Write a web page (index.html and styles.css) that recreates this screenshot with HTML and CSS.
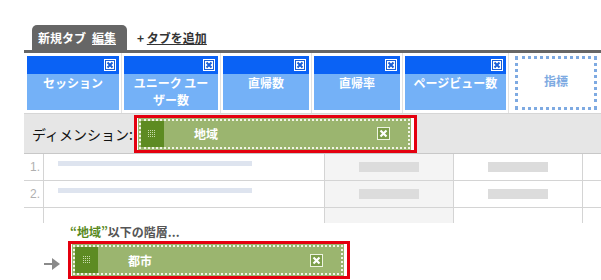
FILE: index.html
```html
<!DOCTYPE html>
<html lang="ja">
<head>
    <meta charset="UTF-8">
    <title>カスタムレポート</title>
    <link rel="stylesheet" href="styles.css">
</head>
<body>
    <div class="report">
        <!-- Tabs -->
        <div class="tabs">
            <div class="tab">新規タブ <a class="tab-edit">編集</a></div>
            <div class="add-tab">+ <a>タブを追加</a></div>
        </div>

        <!-- Metrics -->
        <div class="metrics">
            <div class="metric-cell">
                <div class="metric w1">
                    <div class="metric-head"><svg class="close" width="12" height="12" viewBox="0 0 12 12"><rect width="12" height="12" fill="#fff"/><rect x="1.5" y="1.5" width="9" height="9" fill="none" stroke="#1a5fd6"/><path d="M3.5 3.5 L8.5 8.5 M8.5 3.5 L3.5 8.5" stroke="#1a5fd6" stroke-width="2"/></svg></div>
                    <div class="metric-body">セッション</div>
                </div>
            </div>
            <div class="metric-cell">
                <div class="metric w2">
                    <div class="metric-head"><svg class="close" width="12" height="12" viewBox="0 0 12 12"><rect width="12" height="12" fill="#fff"/><rect x="1.5" y="1.5" width="9" height="9" fill="none" stroke="#1a5fd6"/><path d="M3.5 3.5 L8.5 8.5 M8.5 3.5 L3.5 8.5" stroke="#1a5fd6" stroke-width="2"/></svg></div>
                    <div class="metric-body">ユニーク ユー<br>ザー数</div>
                </div>
            </div>
            <div class="metric-cell">
                <div class="metric w3">
                    <div class="metric-head"><svg class="close" width="12" height="12" viewBox="0 0 12 12"><rect width="12" height="12" fill="#fff"/><rect x="1.5" y="1.5" width="9" height="9" fill="none" stroke="#1a5fd6"/><path d="M3.5 3.5 L8.5 8.5 M8.5 3.5 L3.5 8.5" stroke="#1a5fd6" stroke-width="2"/></svg></div>
                    <div class="metric-body">直帰数</div>
                </div>
            </div>
            <div class="metric-cell">
                <div class="metric w4">
                    <div class="metric-head"><svg class="close" width="12" height="12" viewBox="0 0 12 12"><rect width="12" height="12" fill="#fff"/><rect x="1.5" y="1.5" width="9" height="9" fill="none" stroke="#1a5fd6"/><path d="M3.5 3.5 L8.5 8.5 M8.5 3.5 L3.5 8.5" stroke="#1a5fd6" stroke-width="2"/></svg></div>
                    <div class="metric-body">直帰率</div>
                </div>
            </div>
            <div class="metric-cell">
                <div class="metric w5">
                    <div class="metric-head"><svg class="close" width="12" height="12" viewBox="0 0 12 12"><rect width="12" height="12" fill="#fff"/><rect x="1.5" y="1.5" width="9" height="9" fill="none" stroke="#1a5fd6"/><path d="M3.5 3.5 L8.5 8.5 M8.5 3.5 L3.5 8.5" stroke="#1a5fd6" stroke-width="2"/></svg></div>
                    <div class="metric-body">ページビュー数</div>
                </div>
            </div>
            <div class="metric-cell last">
                <div class="metric-slot">指標</div>
            </div>
        </div>

        <!-- Dimension -->
        <div class="dim-bar">
            <span class="dim-label">ディメンション:</span>
            <div class="highlight">
                <div class="pill wide">
                    <div class="grip"><svg width="8" height="8" viewBox="0 0 8 8"><path d="M0 0h1v1H0zM2 0h1v1H2zM4 0h1v1H4zM6 0h1v1H6zM0 2h1v1H0zM2 2h1v1H2zM4 2h1v1H4zM6 2h1v1H6zM0 4h1v1H0zM2 4h1v1H2zM4 4h1v1H4zM6 4h1v1H6zM0 6h1v1H0zM2 6h1v1H2zM4 6h1v1H4zM6 6h1v1H6z" fill="#c9dcae"/></svg></div>
                    <span class="pill-text">地域</span>
                    <svg class="pill-close" width="13" height="13" viewBox="0 0 13 13"><rect width="13" height="13" fill="#eef4e2"/><rect x="1" y="1" width="11" height="11" fill="#7d9e4b"/><path d="M3.5 3.5 L9.5 9.5 M9.5 3.5 L3.5 9.5" stroke="#fff" stroke-width="2.2"/></svg>
                </div>
            </div>
        </div>

        <!-- Data rows -->
        <div class="rows">
            <div class="row">
                <div class="col num">1.</div>
                <div class="col name"><span class="bar-blue"></span></div>
                <div class="col val shade"><span class="bar-gray"></span></div>
                <div class="col val"><span class="bar-gray"></span></div>
                <div class="col end"></div>
            </div>
            <div class="row">
                <div class="col num">2.</div>
                <div class="col name"><span class="bar-blue"></span></div>
                <div class="col val shade"><span class="bar-gray"></span></div>
                <div class="col val"><span class="bar-gray"></span></div>
                <div class="col end"></div>
            </div>
            <div class="row partial">
                <div class="col num"></div>
                <div class="col name"></div>
                <div class="col val shade"></div>
                <div class="col val"></div>
                <div class="col end"></div>
            </div>
        </div>

        <!-- Sub dimension -->
        <div class="sub">
            <div class="sub-title"><span class="green">“地域”</span>以下の階層...</div>
            <div class="sub-line">
                <svg class="arrow" width="16" height="12" viewBox="0 0 16 12"><path d="M0 5h9v2H0z" fill="#8a8a8a"/><path d="M8 0 L16 6 L8 12 Z" fill="#8a8a8a"/></svg>
                <div class="highlight">
                    <div class="pill narrow">
                        <div class="grip"><svg width="8" height="8" viewBox="0 0 8 8"><path d="M0 0h1v1H0zM2 0h1v1H2zM4 0h1v1H4zM6 0h1v1H6zM0 2h1v1H0zM2 2h1v1H2zM4 2h1v1H4zM6 2h1v1H6zM0 4h1v1H0zM2 4h1v1H2zM4 4h1v1H4zM6 4h1v1H6zM0 6h1v1H0zM2 6h1v1H2zM4 6h1v1H4zM6 6h1v1H6z" fill="#c9dcae"/></svg></div>
                        <span class="pill-text">都市</span>
                        <svg class="pill-close" width="13" height="13" viewBox="0 0 13 13"><rect width="13" height="13" fill="#eef4e2"/><rect x="1" y="1" width="11" height="11" fill="#7d9e4b"/><path d="M3.5 3.5 L9.5 9.5 M9.5 3.5 L3.5 9.5" stroke="#fff" stroke-width="2.2"/></svg>
                    </div>
                </div>
            </div>
        </div>
    </div>
</body>
</html>
```

FILE: styles.css
```css
body {
    margin: 0;
    background: #fff;
    font-family: "Noto Sans CJK JP", "Liberation Sans", sans-serif;
    font-size: 12px;
    overflow: hidden;
}

.report {
    width: 577px;
    margin-left: 24px;
}

/* Tabs */
.tabs {
    display: flex;
    align-items: flex-end;
    height: 25px;
    margin-top: 25px;
    padding-left: 8px;
}

.tab {
    display: flex;
    align-items: center;
    gap: 6px;
    height: 25px;
    padding: 0 6px;
    background: #666;
    color: #fff;
    font-weight: bold;
    border-radius: 5px 5px 0 0;
    box-sizing: border-box;
    width: 95px;
}

.tab-edit {
    text-decoration: underline;
}

.add-tab {
    height: 25px;
    line-height: 25px;
    margin-left: 10px;
    color: #333;
    font-weight: bold;
}

.add-tab a {
    text-decoration: underline;
}

/* Metrics */
.metrics {
    display: flex;
    border-top: 3px solid #666;
    height: 60px;
}

.metric-cell {
    padding: 3px 2px 3px 2px;
    border-right: 1px solid #e2e2e2;
}

.metric-cell:first-child {
    padding-left: 3px;
}

.metric-cell.last {
    border-right: 1px solid #e2e2e2;
    padding: 3px 6px 3px 6px;
}

.metric {
    height: 54px;
    background: #74b1f7;
    display: flex;
    flex-direction: column;
}

.w1 { width: 92px; }
.w2 { width: 94px; }
.w3 { width: 86px; }
.w4 { width: 86px; }
.w5 { width: 101px; }

.metric-head {
    height: 18px;
    background: #0a62f5;
    display: flex;
    justify-content: flex-end;
    align-items: center;
    padding-right: 3px;
}

.metric-body {
    color: #fff;
    font-weight: bold;
    text-align: center;
    line-height: 17px;
    padding-top: 0;
}

.metric-slot {
    width: 76px;
    height: 48px;
    border: 3px dotted #7eaae2;
    color: #7eaae2;
    font-weight: bold;
    text-align: center;
    line-height: 44px;
}

/* Dimension bar */
.dim-bar {
    display: flex;
    align-items: center;
    height: 41px;
    background: #e6e6e6;
    border-top: 1px solid #d6d6d6;
    border-bottom: 1px solid #c8c8c8;
    padding-left: 8px;
    box-sizing: border-box;
}

.dim-label {
    font-size: 14px;
    color: #111;
    margin-right: 1px;
}

.highlight {
    border: 3px solid #e4000f;
    padding: 1px 4px 1px 2px;
    background: #fff;
}

.pill {
    display: flex;
    align-items: center;
    height: 30px;
    box-sizing: border-box;
    border: 2px dotted #f1f5e6;
    background: #9bb56f;
    outline: 1px solid #9bb56f;
}

.pill.wide { width: 271px; }
.pill.narrow { width: 270px; }

.grip {
    width: 23px;
    height: 26px;
    background: #5d8b22;
    display: flex;
    align-items: center;
    justify-content: center;
}

.pill-text {
    color: #fff;
    font-weight: bold;
    margin-left: 30px;
    flex: 1;
}

.pill-close {
    margin-right: 18px;
}

/* Rows */
.rows {
    color: #aaa;
}

.row {
    display: flex;
    height: 26px;
    border-bottom: 1px solid #d4d4d4;
}

.row.partial {
    height: 15px;
    border-bottom: none;
}

.col {
    border-right: 1px solid #d4d4d4;
    box-sizing: border-box;
}

.num {
    width: 20px;
    padding-left: 6px;
    line-height: 26px;
    font-family: "Liberation Sans", sans-serif;
    font-size: 12px;
    color: #b0b0b0;
}

.name {
    width: 281px;
    padding: 7px 0 0 14px;
}

.val {
    width: 129px;
    padding-top: 8px;
    text-align: center;
}

.shade {
    background: #f4f4f4;
}

.end {
    flex: 1;
    border-right: none;
}

.bar-blue {
    display: block;
    width: 194px;
    height: 5px;
    background: #dee4ef;
}

.bar-gray {
    display: inline-block;
    width: 60px;
    height: 10px;
    background: #dcdcdc;
    vertical-align: top;
}

/* Sub dimension */
.sub {
    padding-left: 20px;
}

.sub-title {
    padding-left: 26px;
    height: 18px;
    line-height: 18px;
    font-weight: bold;
    color: #555;
    font-size: 12px;
}

.green {
    color: #5a8a1e;
}

.sub-line {
    display: flex;
    align-items: center;
}

.arrow {
    margin-right: 8px;
    margin-top: 8px;
}
```
